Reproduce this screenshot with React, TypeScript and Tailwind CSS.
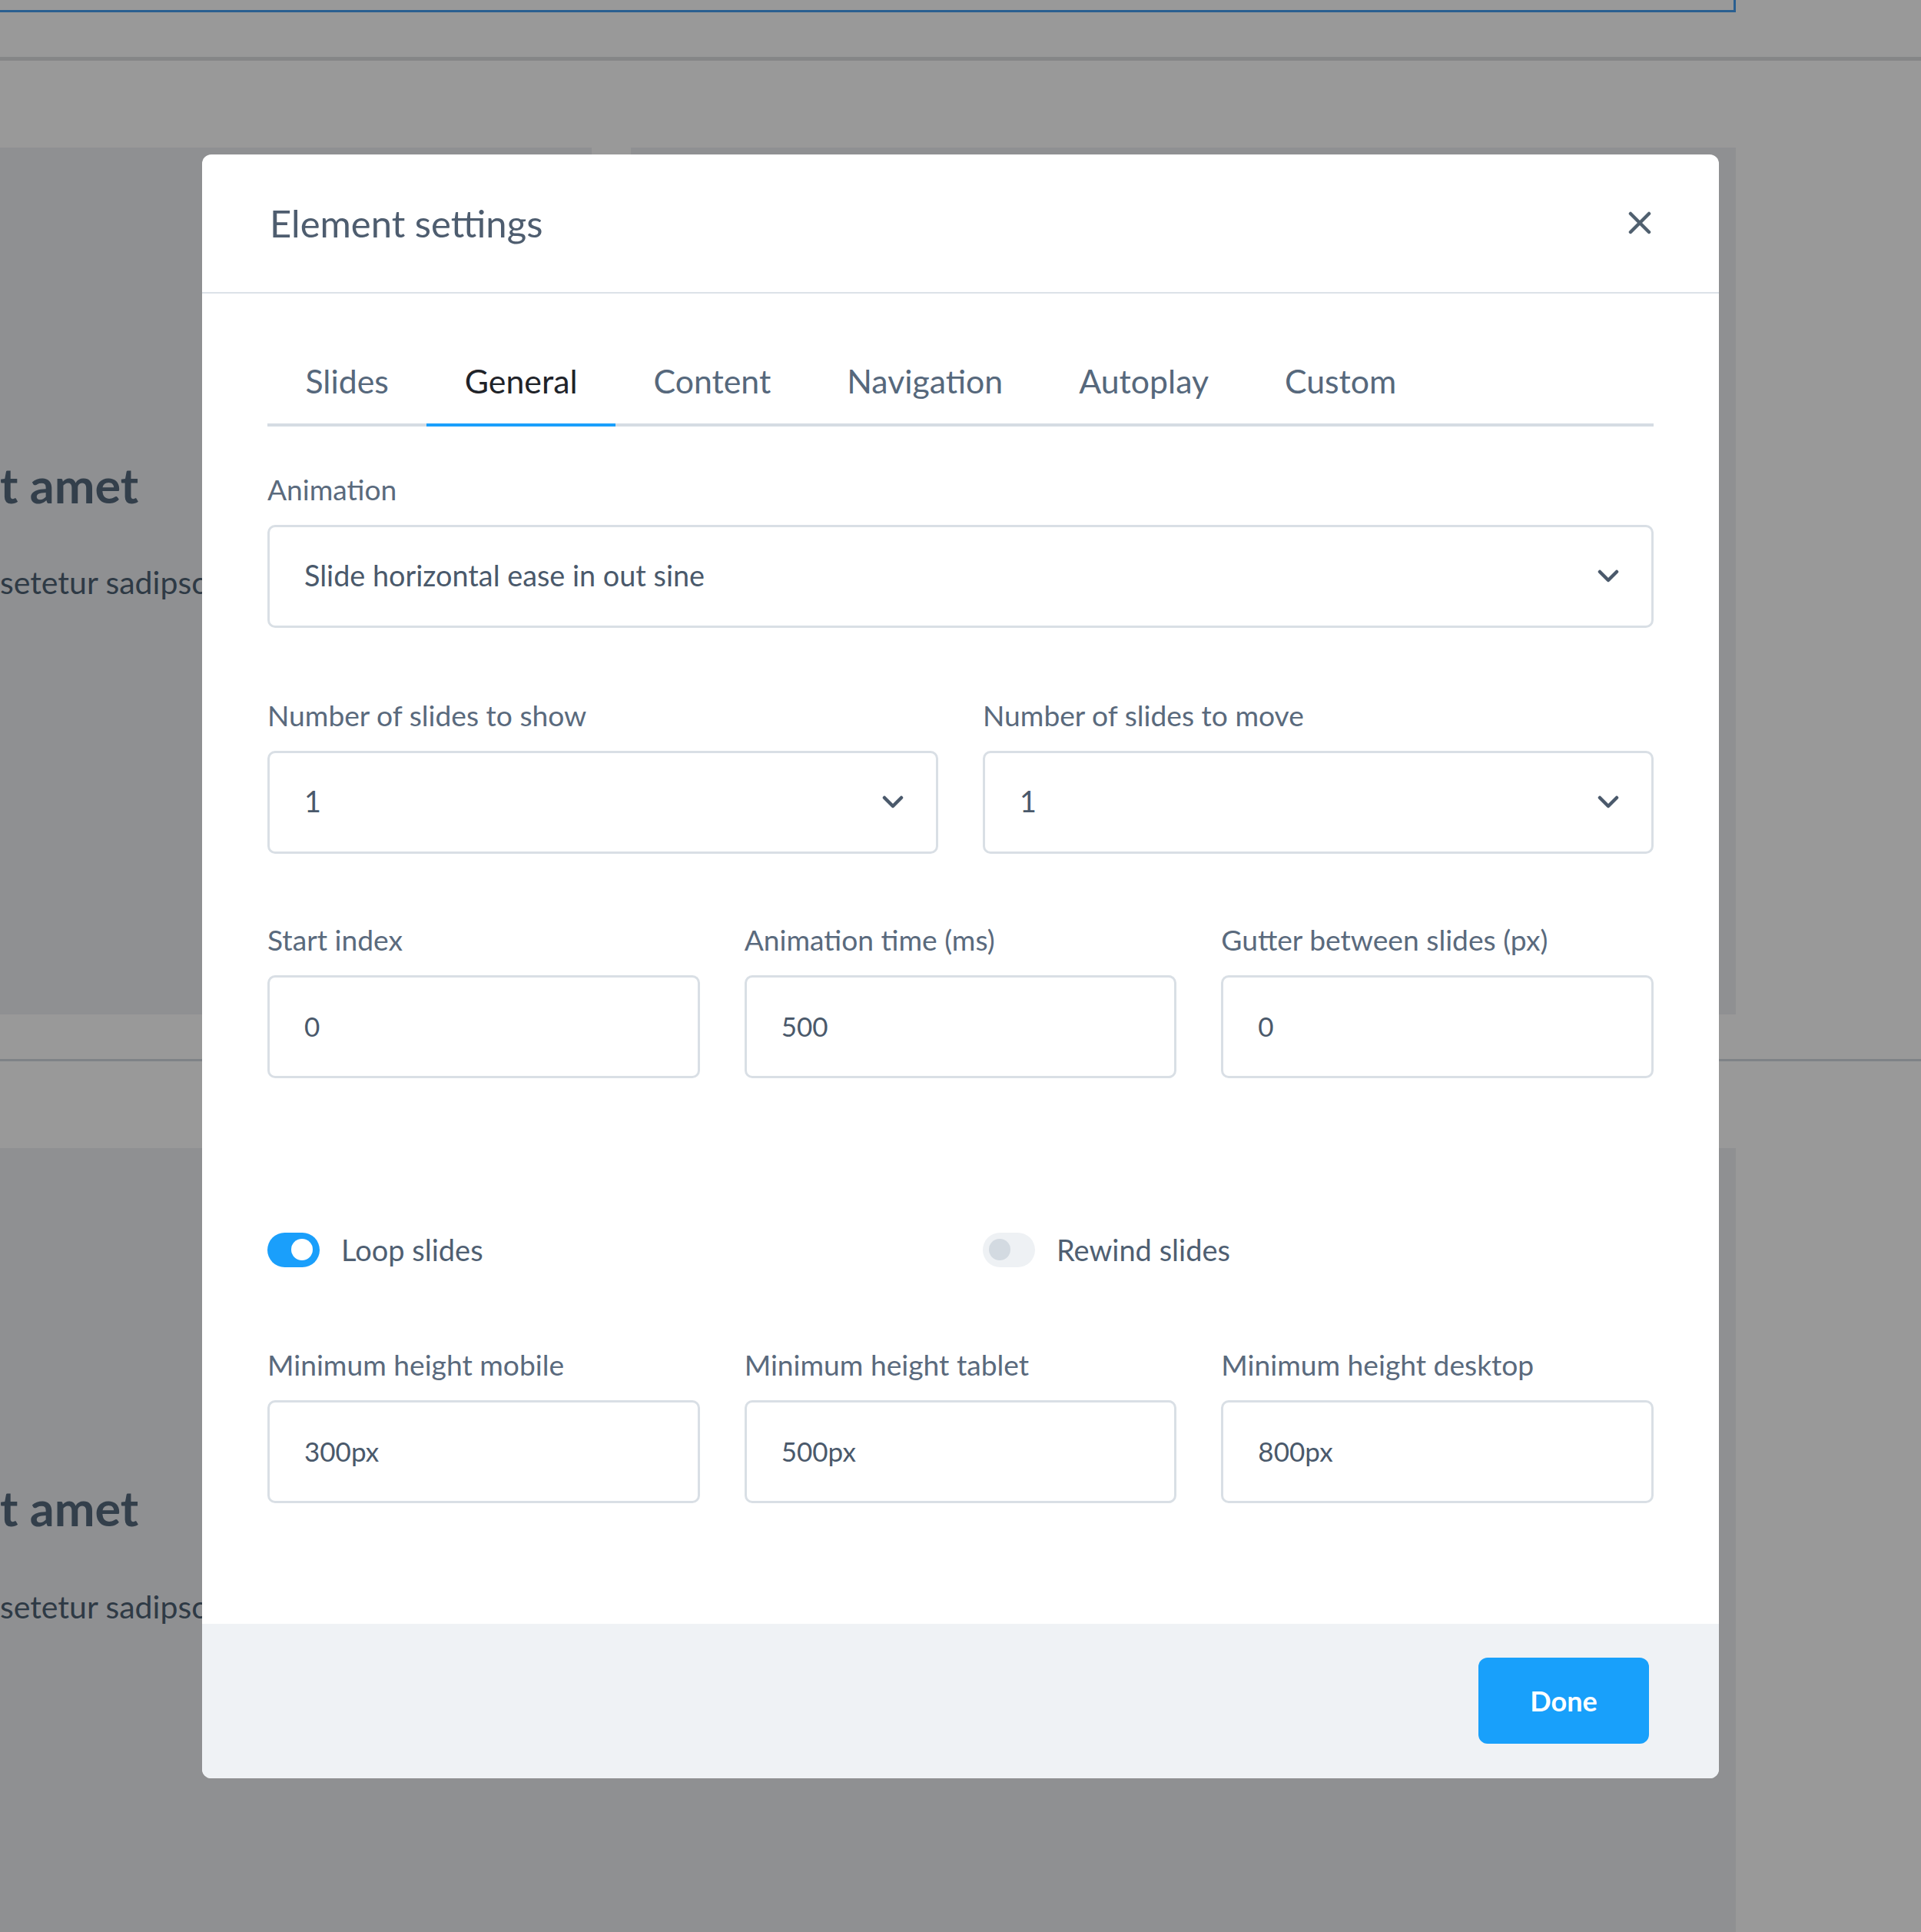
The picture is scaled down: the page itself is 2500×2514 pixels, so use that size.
import React from "react";

const Chevron = () => (
  <svg width="30" height="18" viewBox="0 0 30 18" fill="none">
    <polyline points="4,3 15,14 26,3" stroke="#4a596b" strokeWidth="4.5" strokeLinecap="round" strokeLinejoin="round" />
  </svg>
);

const CloseIcon = () => (
  <svg width="30" height="30" viewBox="0 0 30 30" fill="none">
    <line x1="3" y1="3" x2="27" y2="27" stroke="#50606f" strokeWidth="4.5" strokeLinecap="round" />
    <line x1="27" y1="3" x2="3" y2="27" stroke="#50606f" strokeWidth="4.5" strokeLinecap="round" />
  </svg>
);

function Label({ children }: { children: React.ReactNode }) {
  return <div className="text-[37.2px] leading-[44px] text-[#5a6a7d] whitespace-nowrap">{children}</div>;
}

function SelectBox({ value }: { value: string }) {
  return (
    <div className="mt-[24px] h-[134px] border-[3px] border-[#d9dfe5] rounded-[10px] pl-[45px] pr-[41px] flex items-center justify-between text-[37.8px] text-[#4a596b]">
      <span>{value}</span>
      <Chevron />
    </div>
  );
}

function InputBox({ value }: { value: string }) {
  return (
    <div className="mt-[24px] h-[134px] border-[3px] border-[#d9dfe5] rounded-[10px] pl-[45px] flex items-center text-[35px] text-[#4a596b]">
      <span>{value}</span>
    </div>
  );
}

function Toggle({ on, label }: { on: boolean; label: string }) {
  return (
    <div className="flex items-center">
      {on ? (
        <div className="w-[68px] h-[45px] rounded-full bg-[#1a9ffb] flex items-center justify-end pr-[9px]">
          <div className="w-[28px] h-[28px] rounded-full bg-white" />
        </div>
      ) : (
        <div className="w-[68px] h-[45px] rounded-full bg-[#eef1f4] flex items-center justify-start pl-[8px]">
          <div className="w-[28px] h-[28px] rounded-full bg-[#d3dae1]" />
        </div>
      )}
      <span className="ml-[28px] text-[38px] leading-[45px] text-[#4f5f72]">{label}</span>
    </div>
  );
}

function ClippedText({ hidden, shown, className }: { hidden: string; shown: string; className: string }) {
  return (
    <div className={"flex whitespace-nowrap " + className}>
      <div className="w-0 flex justify-end">
        <span className="shrink-0">{hidden}</span>
      </div>
      <span className="shrink-0">{shown}</span>
    </div>
  );
}

export default function App() {
  const tabs = ["Slides", "General", "Content", "Navigation", "Autoplay", "Custom"];
  return (
    <div
      className="relative w-[2500px] h-[2514px] overflow-hidden bg-white"
      style={{ fontFamily: "Lato, 'Noto Sans', sans-serif" }}
    >
      {/* background page */}
      <div className="flex flex-col h-full">
        <div className="h-[16px] w-[2259px] border-b-[3px] border-r-[3px] border-[#469ff0]" />
        <div className="h-[58px]" />
        <div className="h-[5px] bg-[#dedfe1]" />
        <div className="h-[113px]" />
        <div className="flex h-[1128px] w-[2259px]">
          <div className="w-[770px] bg-[#eff0f3] overflow-hidden pt-[402px]">
            <ClippedText
              hidden="Lorem ipsum dolor si"
              shown="t amet"
              className="text-[63px] leading-[74px] font-bold text-[#55697d]"
            />
            <ClippedText
              hidden="Lorem ipsum dolor sit amet, con"
              shown="setetur sadipscing elitr, sed diam"
              className="mt-[66px] text-[41px] leading-[47px] text-[#4e6173]"
            />
          </div>
          <div className="w-[51px]" />
          <div className="flex-1 bg-[#eff0f3]" />
        </div>
        <div className="h-[58px]" />
        <div className="h-[3px] bg-[#d2d9e1]" />
        <div className="h-[113px]" />
        <div className="flex-1 w-[2259px] bg-[#eff0f3] overflow-hidden pt-[431px]">
          <ClippedText
            hidden="Lorem ipsum dolor si"
            shown="t amet"
            className="text-[63px] leading-[74px] font-bold text-[#55697d]"
          />
          <ClippedText
            hidden="Lorem ipsum dolor sit amet, con"
            shown="setetur sadipscing elitr, sed diam"
            className="mt-[68px] text-[41px] leading-[47px] text-[#4e6173]"
          />
        </div>
      </div>

      {/* overlay + modal */}
      <div className="absolute inset-0 bg-black/40 flex items-center justify-center">
        <div className="w-[1974px] rounded-[12px] bg-white overflow-hidden flex flex-col">
          <div className="h-[181px] border-b-2 border-[#dce2e8] flex items-center justify-between pl-[88px] pr-[88px]">
            <h2 className="text-[49px] leading-none text-[#4e5d6f]">Element settings</h2>
            <CloseIcon />
          </div>

          <div className="px-[85px] pt-[89px] pb-[157px]">
            <div className="flex border-b-4 border-[#d5dce3]">
              {tabs.map((t) => (
                <div
                  key={t}
                  className={
                    t === "General"
                      ? "px-[49.5px] pb-[30px] -mb-[4px] border-b-4 border-[#1a9ffb] text-[42.8px] leading-[50px] text-[#1f2329]"
                      : "px-[49.5px] pb-[30px] -mb-[4px] border-b-4 border-transparent text-[42.8px] leading-[50px] text-[#56687c]"
                  }
                >
                  {t}
                </div>
              ))}
            </div>

            <div className="mt-[60px]">
              <Label>Animation</Label>
              <SelectBox value="Slide horizontal ease in out sine" />
            </div>

            <div className="mt-[92px] grid grid-cols-2 gap-x-[58px]">
              <div>
                <Label>Number of slides to show</Label>
                <SelectBox value="1" />
              </div>
              <div>
                <Label>Number of slides to move</Label>
                <SelectBox value="1" />
              </div>
            </div>

            <div className="mt-[90px] grid grid-cols-3 gap-x-[58px]">
              <div>
                <Label>Start index</Label>
                <InputBox value="0" />
              </div>
              <div>
                <Label>Animation time (ms)</Label>
                <InputBox value="500" />
              </div>
              <div>
                <Label>Gutter between slides (px)</Label>
                <InputBox value="0" />
              </div>
            </div>

            <div className="mt-[201px] grid grid-cols-2 gap-x-[58px]">
              <Toggle on label="Loop slides" />
              <Toggle on={false} label="Rewind slides" />
            </div>

            <div className="mt-[105px] grid grid-cols-3 gap-x-[58px]">
              <div>
                <Label>Minimum height mobile</Label>
                <InputBox value="300px" />
              </div>
              <div>
                <Label>Minimum height tablet</Label>
                <InputBox value="500px" />
              </div>
              <div>
                <Label>Minimum height desktop</Label>
                <InputBox value="800px" />
              </div>
            </div>
          </div>

          <div className="h-[201px] bg-[#eff2f5] flex items-center justify-end pr-[91px]">
            <button className="w-[222px] h-[112px] rounded-[12px] bg-[#18a0fb] text-white font-bold text-[36px]">
              Done
            </button>
          </div>
        </div>
      </div>
    </div>
  );
}
